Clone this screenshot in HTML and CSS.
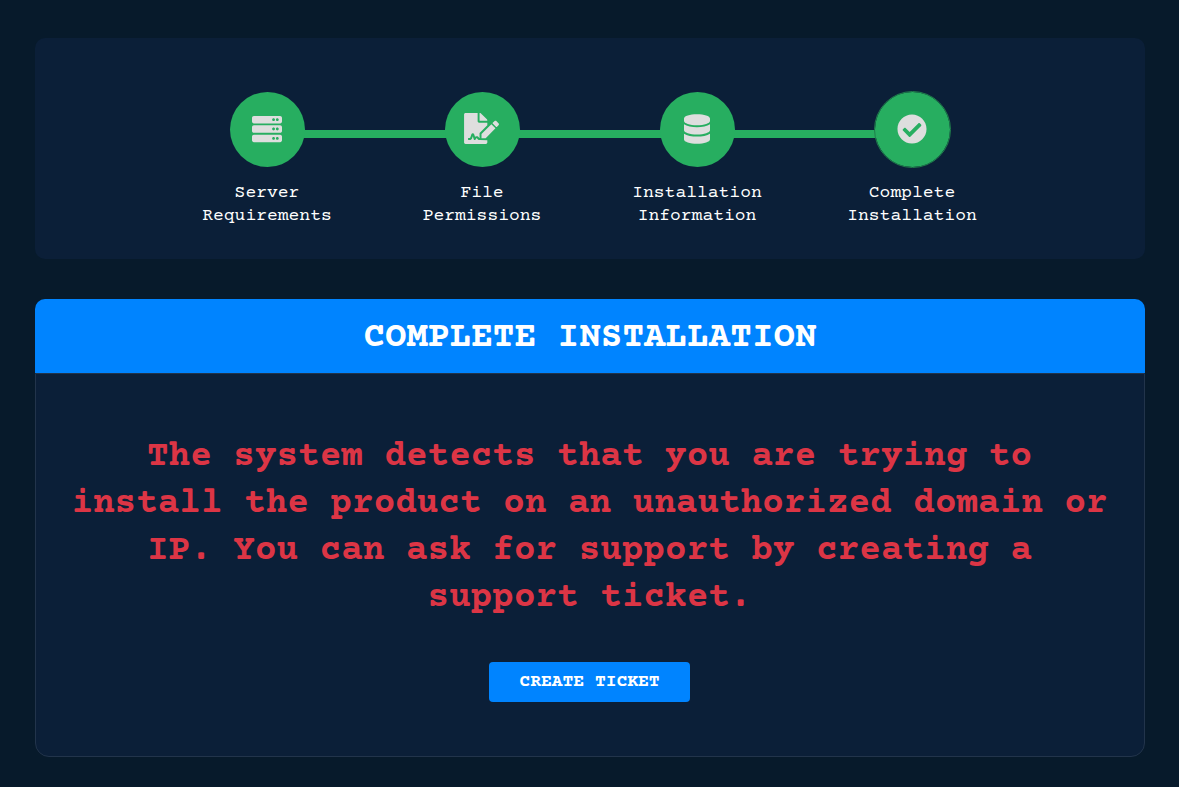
FILE: index.html
```html
<!DOCTYPE html>
<html lang="en">
<head>
  <meta charset="UTF-8">
  <meta name="viewport" content="width=device-width, initial-scale=1.0">
  <title>Complete Installation</title>
  <link rel="stylesheet" href="styles.css">
</head>
<body>
  <section class="steps-card">
    <ul class="steps">
      <li class="step">
        <span class="step-icon">
          <svg viewBox="0 0 512 512" width="30" height="30"><path d="M480 160H32c-17.673 0-32-14.327-32-32V64c0-17.673 14.327-32 32-32h448c17.673 0 32 14.327 32 32v64c0 17.673-14.327 32-32 32zm-48-88c-13.255 0-24 10.745-24 24s10.745 24 24 24 24-10.745 24-24-10.745-24-24-24zm-64 0c-13.255 0-24 10.745-24 24s10.745 24 24 24 24-10.745 24-24-10.745-24-24-24zm112 248H32c-17.673 0-32-14.327-32-32v-64c0-17.673 14.327-32 32-32h448c17.673 0 32 14.327 32 32v64c0 17.673-14.327 32-32 32zm-48-88c-13.255 0-24 10.745-24 24s10.745 24 24 24 24-10.745 24-24-10.745-24-24-24zm-64 0c-13.255 0-24 10.745-24 24s10.745 24 24 24 24-10.745 24-24-10.745-24-24-24zm112 248H32c-17.673 0-32-14.327-32-32v-64c0-17.673 14.327-32 32-32h448c17.673 0 32 14.327 32 32v64c0 17.673-14.327 32-32 32zm-48-88c-13.255 0-24 10.745-24 24s10.745 24 24 24 24-10.745 24-24-10.745-24-24-24zm-64 0c-13.255 0-24 10.745-24 24s10.745 24 24 24 24-10.745 24-24-10.745-24-24-24z"/></svg>
        </span>
        <span class="step-label">Server Requirements</span>
      </li>
      <li class="step">
        <span class="step-icon">
          <svg viewBox="0 0 576 512" width="35" height="31"><path d="M218.17 424.14c-2.95-5.92-8.09-6.52-10.17-6.52s-7.22.59-10.02 6.19l-7.67 15.34c-6.37 12.78-25.03 11.37-29.48-2.09L144 384l-10.61 31.88c-5.89 17.66-22.38 29.82-41 29.82H80c-8.84 0-16-7.16-16-16s7.16-16 16-16h12.39c4.83 0 9.11-3.08 10.64-7.66l18.19-54.64c3.3-9.81 12.44-16.41 22.78-16.41s19.48 6.59 22.77 16.41l13.88 41.64c19.77-16.19 54.05-9.7 66 14.16 1.89 3.78 5.49 5.95 9.36 6.26v-82.12l128-127.09V160H248c-13.2 0-24-10.8-24-24V0H24C10.7 0 0 10.7 0 24v464c0 13.3 10.7 24 24 24h336c13.3 0 24-10.7 24-24v-40l-128-.11c-16.12-.31-30.58-9.28-37.83-23.75zM384 121.9c0-6.3-2.5-12.4-7-16.9L279.1 7c-4.5-4.5-10.6-7-17-7H256v128h128v-6.1zm-96 225.06V416h68.99l161.68-162.78-67.88-67.88L288 346.96zm280.54-179.63l-31.87-31.87c-9.94-9.94-26.07-9.94-36.01 0l-27.25 27.25c-2.94 2.94-2.94 7.7 0 10.64l57.23 57.23c2.94 2.94 7.7 2.94 10.64 0l27.25-27.25c10.78-10.77 10.78-26.9 0-36z"/></svg>
        </span>
        <span class="step-label">File Permissions</span>
      </li>
      <li class="step">
        <span class="step-icon">
          <svg viewBox="0 0 448 512" width="26" height="30"><path d="M448 73.143v45.714C448 159.143 347.667 192 224 192S0 159.143 0 118.857V73.143C0 32.857 100.333 0 224 0s224 32.857 224 73.143zM448 176v102.857C448 319.143 347.667 352 224 352S0 319.143 0 278.857V176c48.125 33.143 136.208 48.572 224 48.572S399.874 209.143 448 176zm0 160v102.857C448 479.143 347.667 512 224 512S0 479.143 0 438.857V336c48.125 33.143 136.208 48.572 224 48.572S399.874 369.143 448 336z"/></svg>
        </span>
        <span class="step-label">Installation Information</span>
      </li>
      <li class="step step-current">
        <span class="step-icon">
          <svg viewBox="0 0 512 512" width="30" height="30"><path d="M504 256c0 136.967-111.033 248-248 248S8 392.967 8 256 119.033 8 256 8s248 111.033 248 248zM227.314 387.314l184-184c6.248-6.248 6.248-16.379 0-22.627l-22.627-22.627c-6.248-6.249-16.379-6.249-22.628 0L216 308.118l-70.059-70.059c-6.248-6.248-16.379-6.248-22.628 0l-22.627 22.627c-6.248 6.248-6.248 16.379 0 22.627l104 104c6.249 6.249 16.379 6.249 22.628.001z"/></svg>
        </span>
        <span class="step-label">Complete Installation</span>
      </li>
    </ul>
  </section>

  <section class="panel">
    <h1 class="panel-title">COMPLETE INSTALLATION</h1>
    <div class="panel-body">
      <p class="warning">The system detects that you are trying to install the product on an unauthorized domain or IP. You can ask for support by creating a support ticket.</p>
      <a href="#" class="btn">CREATE TICKET</a>
    </div>
  </section>
</body>
</html>
```

FILE: styles.css
```css
* { box-sizing: border-box; margin: 0; padding: 0; }
body { font-family: "Courier Prime", FreeMono, "Liberation Mono", monospace; background: #071a2b; color: #fff; padding: 38px 34px 30px 35px; }

.steps-card { background: #0b1f38; border-radius: 10px; padding: 54px 0 31px; margin-bottom: 40px; }
.steps { list-style: none; display: grid; grid-template-columns: repeat(4, 215px); justify-content: center; }
.step { position: relative; display: flex; flex-direction: column; align-items: center; }
.step:not(:last-child)::after { content: ""; position: absolute; top: 38px; left: 50%; width: 100%; height: 8px; background: #27ae60; }
.step-icon { position: relative; z-index: 1; width: 75px; height: 75px; padding: 0 2px 2px 0; border-radius: 50%; background: #27ae60; display: flex; align-items: center; justify-content: center; }
.step-icon svg { fill: #dedede; display: block; }
.step-current .step-icon { outline: 1px solid #1f7f4b; }
.step-label { width: 150px; margin-top: 15px; padding-right: 1px; font-size: 18px; line-height: 23px; text-align: center; color: #fff; }

.panel-title { background: #0084ff; color: #fff; font-size: 36px; padding-top: 4px; line-height: 70px; text-align: center; font-weight: bold; border-radius: 10px 10px 0 0; }
.panel-body { height: 384px; background: #0b1f38; border: 1px solid #22344b; border-radius: 0 0 14px 14px; padding: 60px 36px 0 35px; text-align: center; }
.warning { color: #dc3545; font-size: 36px; line-height: 47px; font-weight: bold; }
.btn { display: inline-block; margin-top: 40px; width: 201px; height: 40px; line-height: 40px; border-radius: 4px; background: #0084ff; color: #fff; font-size: 18px; font-weight: bold; text-decoration: none; }
```
